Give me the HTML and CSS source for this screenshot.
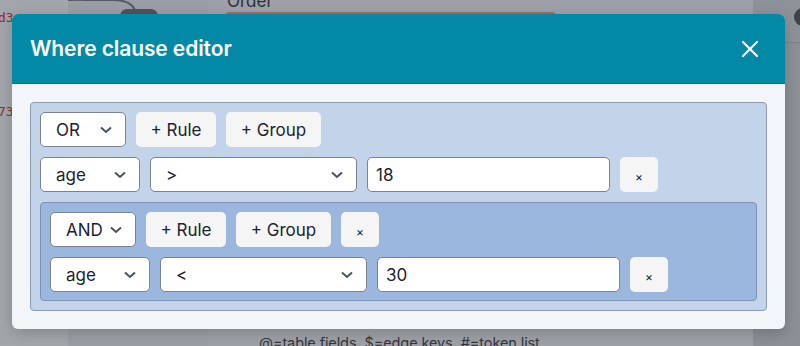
FILE: index.html
```html
<!DOCTYPE html>
<html lang="en">
<head>
    <meta charset="UTF-8">
    <meta name="viewport" content="width=device-width, initial-scale=1.0">
    <title>Where clause editor</title>
    <link rel="stylesheet" href="styles.css">
</head>
<body>
    <!-- Page behind the dialog (dimmed) -->
    <div class="page">
        <div class="side">
            <div class="side-strip">
                <span class="code code-top">d3</span>
                <span class="code code-mid">73</span>
            </div>
            <div class="graph">
                <svg class="edge" width="140" height="30" viewBox="0 0 140 30">
                    <path d="M0 1 H45 Q66 1 68 15" fill="none" stroke="#55595f" stroke-width="2"/>
                    <rect x="52" y="10" width="38" height="14" rx="7" fill="#4f545a"/>
                    <rect x="2" y="-10" width="16" height="12" rx="3" fill="#5d6268"/>
                </svg>
            </div>
        </div>
        <div class="main">
            <div class="field-label">Order</div>
            <div class="field-bar"></div>
            <div class="hint">@=table fields, $=edge keys, #=token list</div>
        </div>
        <div class="panel">
            <span class="dot"></span>
        </div>
    </div>

    <!-- Dialog -->
    <div class="modal">
        <div class="modal-header">
            <h2>Where clause editor</h2>
            <button class="close-btn" aria-label="Close">
                <svg width="18" height="18" viewBox="0 0 18 18">
                    <path d="M2 2 L16 16 M16 2 L2 16" stroke="#fff" stroke-width="2.2" stroke-linecap="round"/>
                </svg>
            </button>
        </div>
        <div class="modal-body">
            <div class="group">
                <div class="row">
                    <div class="select w-logic">OR <svg class="chev" width="12" height="8" viewBox="0 0 12 8"><path d="M1 1.5 L6 6 L11 1.5" fill="none" stroke="#4b5260" stroke-width="2"/></svg></div>
                    <button class="btn w-rule">+ Rule</button>
                    <button class="btn w-group">+ Group</button>
                </div>
                <div class="row">
                    <div class="select w-field">age <svg class="chev" width="12" height="8" viewBox="0 0 12 8"><path d="M1 1.5 L6 6 L11 1.5" fill="none" stroke="#4b5260" stroke-width="2"/></svg></div>
                    <div class="select w-op">&gt; <svg class="chev" width="12" height="8" viewBox="0 0 12 8"><path d="M1 1.5 L6 6 L11 1.5" fill="none" stroke="#4b5260" stroke-width="2"/></svg></div>
                    <input class="value" type="text" value="18">
                    <button class="btn btn-x">×</button>
                </div>

                <div class="group group-inner">
                    <div class="row">
                        <div class="select w-logic">AND <svg class="chev" width="12" height="8" viewBox="0 0 12 8"><path d="M1 1.5 L6 6 L11 1.5" fill="none" stroke="#4b5260" stroke-width="2"/></svg></div>
                        <button class="btn w-rule">+ Rule</button>
                        <button class="btn w-group">+ Group</button>
                        <button class="btn btn-x">×</button>
                    </div>
                    <div class="row">
                        <div class="select w-field">age <svg class="chev" width="12" height="8" viewBox="0 0 12 8"><path d="M1 1.5 L6 6 L11 1.5" fill="none" stroke="#4b5260" stroke-width="2"/></svg></div>
                        <div class="select w-op">&lt; <svg class="chev" width="12" height="8" viewBox="0 0 12 8"><path d="M1 1.5 L6 6 L11 1.5" fill="none" stroke="#4b5260" stroke-width="2"/></svg></div>
                        <input class="value" type="text" value="30">
                        <button class="btn btn-x">×</button>
                    </div>
                </div>
            </div>
        </div>
    </div>
</body>
</html>
```
FILE: styles.css
```css
/* General */
body {
    margin: 0;
    font-family: Inter, "Noto Sans", sans-serif;
    color: #1f2937;
    overflow: hidden;
}

/* Dimmed page behind the dialog */
.page {
    display: flex;
    height: 346px;
    background: #9ea1a7;
}

.side {
    width: 208px;
    display: flex;
}

.side-strip {
    width: 69px;
    background: #a2a5a9;
    position: relative;
}

.code {
    position: absolute;
    left: -2px;
    font-family: "DejaVu Sans Mono", monospace;
    font-size: 13px;
    color: #8e2b35;
}

.code-top { top: 10px; }
.code-mid { top: 104px; }

.graph {
    flex: 1;
    background: #9a9da3;
}

.edge {
    display: block;
    margin-top: -1px;
}

.main {
    width: 545px;
    position: relative;
    background: #9da1a7;
}

.field-label {
    position: absolute;
    left: 19px;
    top: -9px;
    font-size: 17px;
    color: #2d3036;
}

.field-bar {
    position: absolute;
    left: 17px;
    top: 12px;
    width: 331px;
    height: 6px;
    border-radius: 4px 4px 0 0;
    background: #a8695f;
}

.hint {
    position: absolute;
    left: 51px;
    top: 334px;
    font-size: 14.5px;
    letter-spacing: -0.1px;
    color: #33363b;
}

.panel {
    flex: 1;
    background: #8b8f96;
    border-top: 42px solid #8d9198;
    box-shadow: inset 0 1px 0 #7d8188;
    position: relative;
}

.dot {
    position: absolute;
    right: -12px;
    top: -34px;
    width: 18px;
    height: 18px;
    border-radius: 50%;
    background: #3f4349;
}

/* Dialog */
.modal {
    position: absolute;
    left: 12px;
    top: 14px;
    width: 773px;
    height: 315px;
    border-radius: 6px;
    overflow: hidden;
    background: #f3f6f9;
    box-shadow: 0 4px 14px rgba(0, 0, 0, 0.18);
    display: flex;
    flex-direction: column;
}

.modal-header {
    height: 69px;
    background: #0289a6;
    border-bottom: 1px solid #027a94;
    display: flex;
    align-items: center;
    justify-content: space-between;
    padding: 0 26px 0 18px;
}

.modal-header h2 {
    margin: 0;
    color: #fff;
    font-size: 21px;
    font-weight: 600;
    letter-spacing: -0.1px;
}

.close-btn {
    background: none;
    border: none;
    padding: 0;
    display: flex;
    cursor: pointer;
}

.modal-body {
    padding: 18px;
}

/* Query groups */
.group {
    background: #c3d3e9;
    border: 1px solid #8d99b0;
    border-radius: 4px;
    padding: 9px 9px 9px;
    display: flex;
    flex-direction: column;
    gap: 10px;
}

.group-inner {
    background: #9bb7de;
    border-color: #7f92b3;
    padding-bottom: 8px;
}

.row {
    display: flex;
    gap: 10px;
}

.select,
.value {
    box-sizing: border-box;
    height: 35px;
    background: #fff;
    border: 1px solid #7b8291;
    border-radius: 5px;
    font-family: inherit;
    font-size: 17px;
    color: #1c2430;
}

.select {
    display: flex;
    align-items: center;
    justify-content: space-between;
    padding: 0 13px 0 15px;
}

.value {
    width: 243px;
    padding: 0 8px;
    outline: none;
}

.w-logic { width: 86px; }
.w-field { width: 100px; }
.w-op { width: 207px; }

.btn {
    box-sizing: border-box;
    height: 35px;
    border: none;
    border-radius: 5px;
    background: #f5f5f6;
    font-family: inherit;
    font-size: 17px;
    color: #1c2430;
    cursor: pointer;
}

.w-rule { width: 80px; }
.w-group { width: 95px; }

.btn-x {
    width: 38px;
    font-size: 12px;
    padding-top: 4px;
}
```
